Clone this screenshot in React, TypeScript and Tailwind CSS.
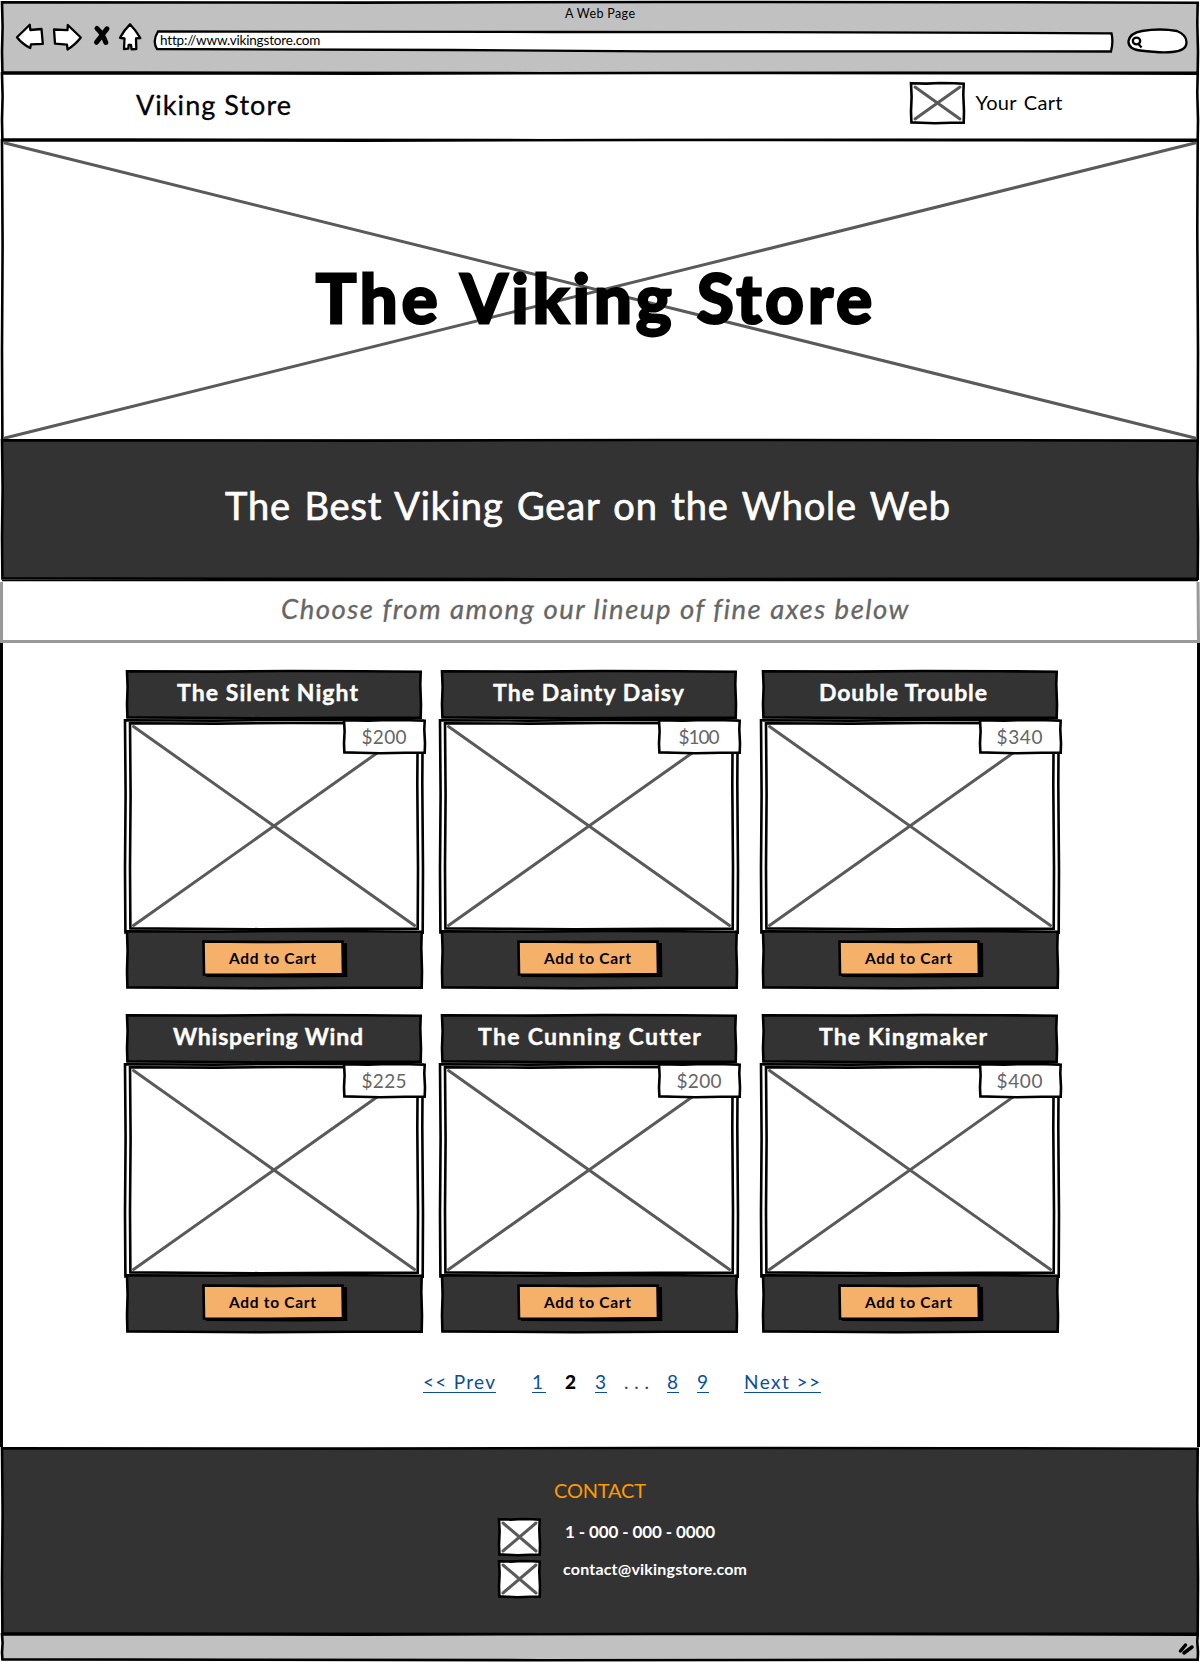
import { useLayoutEffect, useRef, useState } from "react";

/** A label whose letters are spread so that the line is exactly `w` pixels wide. */
function Label({ text, w, className = "" }: { text: string; w: number; className?: string }) {
  const ref = useRef<HTMLSpanElement>(null);
  const [gap, setGap] = useState(0);
  useLayoutEffect(() => {
    if (!ref.current) return;
    const natural = ref.current.getBoundingClientRect().width - gap * text.length;
    setGap((w - natural) / (text.length - 1 || 1));
  }, [text, w]);
  return (
    <span ref={ref} className={"block w-max shrink-0 whitespace-pre leading-none " + className} style={{ letterSpacing: gap }}>
      {text}
    </span>
  );
}

/** Hand-drawn rectangle that fills its positioned parent. */
function Sketch({
  w,
  h,
  fill = "#fff",
  stroke = "#000",
  sw = 2.6,
  cross = false,
  inset = 4,
}: {
  w: number;
  h: number;
  fill?: string;
  stroke?: string;
  sw?: number;
  cross?: boolean;
  inset?: number;
}) {
  const r = w - 1.3;
  const b = h - 1.3;
  return (
    <svg className="absolute left-0 top-0 overflow-visible" width={w} height={h} fill="none">
      <path
        d={`M1 1.2 L${w * 0.3} 1.6 L${w * 0.55} 1 L${w * 0.8} 1.2 L${r} 1.7 L${r - 0.4} ${h * 0.3} L${r + 0.3} ${h * 0.7} L${r} ${b} L${w * 0.75} ${b + 0.1} L${w * 0.45} ${b + 0.5} L${w * 0.2} ${b} L1.4 ${b - 0.3} L1 ${h * 0.7} L1.6 ${h * 0.35} Z`}
        fill={fill}
        stroke={stroke}
        strokeWidth={sw}
      />
      {cross && (
        <path
          d={`M${inset} ${inset} L${w - inset} ${h - inset} M${w - inset} ${inset} L${inset} ${h - inset}`}
          stroke="#5a5a5a"
          strokeWidth={3}
          strokeLinecap="round"
        />
      )}
    </svg>
  );
}

type Product = { name: string; w: number; title: string; price: string; pw: number; tag: string };

const products: Product[] = [
  { name: "The Silent Night", w: 181, title: "ml-[51.500px]", price: "$200", pw: 45, tag: "ml-[18.500px]" },
  { name: "The Dainty Daisy", w: 191, title: "ml-[52.500px]", price: "$100", pw: 41, tag: "ml-[20.500px]" },
  { name: "Double Trouble", w: 168, title: "ml-[57.500px]", price: "$340", pw: 46, tag: "ml-[17.500px]" },
  { name: "Whispering Wind", w: 190, title: "ml-[47.500px]", price: "$225", pw: 45, tag: "ml-[18.500px]" },
  { name: "The Cunning Cutter", w: 222, title: "ml-[37.500px]", price: "$200", pw: 45, tag: "ml-[18.500px]" },
  { name: "The Kingmaker", w: 168, title: "ml-[57.500px]", price: "$400", pw: 46, tag: "ml-[17.500px]" },
];

function Card({ p }: { p: Product }) {
  return (
    <article className="flex w-[300px] flex-col">
      <div className="relative ml-[1.5px] h-[49px] w-[296px]">
        <Sketch w={296} h={49} fill="#333" />
        <h3 className="relative pt-[10.5px] text-white">
          <Label text={p.name} w={p.w} className={"text-[23px] font-bold [-webkit-text-stroke:0.4px_#fff] " + p.title} />
        </h3>
      </div>
      <div className="relative h-[211px] pl-[5px] pt-[3px]">
        <Sketch w={300} h={215} />
        <div className="relative h-[208px] w-[290px]">
          <Sketch w={290} h={208} cross inset={4.5} />
        </div>
        <div className="absolute left-[219px] top-0 h-[35px] w-[83px] pt-[8px]">
          <Sketch w={83} h={35} />
          <Label text={p.price} w={p.pw} className={"relative text-[19px] text-[#666] " + p.tag} />
        </div>
      </div>
      <div className="relative ml-[2px] h-[59px] w-[297px] pl-[75.500px] pt-[10px]">
        <Sketch w={297} h={59} fill="#333" />
        <button className="relative flex h-[38px] w-[146px] items-start">
          <svg className="absolute left-0 top-0" width="146" height="38" fill="none">
            <path d="M4 4 L145 3 L145.300 37 L100 37.600 L4 37 Z" fill="#000" />
            <path d="M1.500 1.500 L70 2 L140.500 1.500 L141 34 L70 34.800 L2 34.500 Z" fill="#f5b06a" stroke="#000" strokeWidth="2.600" />
          </svg>
          <Label text="Add to Cart" w={87} className="relative ml-[27.500px] mt-[11px] text-[15.500px] font-bold" />
        </button>
      </div>
    </article>
  );
}

function BrowserBar() {
  return (
    <div className="relative h-[74px] w-[1200px]">
      <div className="absolute left-[1px] top-[0.500px]">
        <Sketch w={1198} h={73} fill="#c1c1c1" />
      </div>
      <div className="relative pl-[565px] pt-[8px]">
        <Label text="A Web Page" w={70} className="text-[12.500px]" />
      </div>
      <div className="relative mt-[1.500px] flex items-start pl-[15px]">
        <svg width="137" height="30" viewBox="15 22 137 30" fill="#fff" stroke="#000" strokeWidth="2.300" strokeLinejoin="round">
          <path d="M17 37.300 L29.800 24.800 L30.300 30 L41.500 29 L42.800 43.800 L31 44.300 L30.200 48 Q22 44 17 37.300 Z" />
          <path d="M80.800 37.500 L67.800 25 L67.500 30.200 L54 29.500 L55 43.700 L67 44.600 L67.500 49.500 Q75 45 80.800 37.500 Z" />
          <path d="M97 28.500 Q103 34 105.800 42.500 M107 28.800 Q101.500 36 96.500 42.300" fill="none" strokeWidth="5" strokeLinecap="round" />
          <path d="M130 24.300 Q124 30 120 37.800 L124.500 38.500 L124 49 L128.300 48.600 L128.600 45 L131 45 L131.600 49.300 L136.300 49 L136 38.400 L140.300 38 Q136 30.500 130 24.300 Z" />
        </svg>
        <div className="relative ml-[1px] h-[24px] w-[961px] pl-[7px] pt-[12px]">
          <svg className="absolute left-0 top-[8px] overflow-visible" width="961" height="22" fill="none">
            <path d="M5 1.500 L400 2 L700 2.300 L958.500 3.300 Q960.500 12 958 21.500 L500 21.300 L300 20 L4 19 Q-1 11 5 1.500 Z" fill="#fff" stroke="#000" strokeWidth="2.300" />
          </svg>
          <Label text="http://www.vikingstore.com" w={160} className="relative text-[13.500px]" />
        </div>
        <svg className="ml-[13px] mt-[5px]" width="62" height="27" viewBox="1127 27 62 27" fill="none" stroke="#000" strokeWidth="2.300">
          <path d="M1142 31 Q1160 28 1177 31 Q1187 35 1186.500 43 Q1186 51 1172 52 Q1160 53 1140 50.500 Q1128 49 1128.500 41 Q1130 33 1142 31 Z" fill="#fff" />
          <ellipse cx="1136.500" cy="41" rx="3.700" ry="3.300" />
          <path d="M1138 43.500 L1141.500 47.500" />
        </svg>
      </div>
    </div>
  );
}

export default function App() {
  return (
    <div className="relative flex h-[1662px] w-[1200px] flex-col overflow-hidden bg-white font-['Lato',sans-serif] text-black">
      <BrowserBar />

      <header className="relative -mt-[2px] flex h-[69px] w-[1200px] items-start">
        <div className="absolute left-[1px] top-0">
          <Sketch w={1198} h={69} />
        </div>
        <Label text="Viking Store" w={155} className="relative ml-[136px] mt-[18.500px] text-[27px] [-webkit-text-stroke:0.3px_#000]" />
        <div className="relative ml-[618px] mt-[10px] h-[42px] w-[55px] shrink-0">
          <Sketch w={55} h={42} cross inset={5} />
        </div>
        <Label text="Your Cart" w={87} className="relative ml-[10.500px] mt-[19.500px] text-[20px] [word-spacing:2px]" />
      </header>

      <section className="relative -mt-[2px] h-[303px] w-[1200px] pl-[316px] pt-[125px]">
        <div className="absolute left-[1px] top-0">
          <Sketch w={1198} h={303} cross inset={4} />
        </div>
        <h1 className="relative">
          <Label text="The Viking Store" w={556} className="text-[67px] font-bold [stroke-linejoin:round] [word-spacing:1px] [-webkit-text-stroke:3px_#000]" />
        </h1>
      </section>

      <section className="relative -mt-[3px] h-[142px] w-[1200px] pl-[225px] pt-[47px]">
        <div className="absolute left-[1px] top-0">
          <Sketch w={1198} h={141} fill="#333" />
        </div>
        <h2 className="relative text-white">
          <Label text="The Best Viking Gear on the Whole Web" w={725} className="text-[38px] [word-spacing:3px] [-webkit-text-stroke:0.7px_#fff]" />
        </h2>
      </section>

      <section className="relative -mt-[1px] h-[63px] w-[1200px] pl-[281px] pt-[15px]">
        <svg className="absolute left-0 top-0" width="1200" height="63" fill="none">
          <path d="M1.500 2 L1.500 61.500 L1198.500 61.500 L1198 2" stroke="#999" strokeWidth="3" />
          <path d="M2 0.500 L1198 0.500" stroke="#000" strokeWidth="1.500" />
        </svg>
        <p className="relative">
          <Label text="Choose from among our lineup of fine axes below" w={627} className="text-[27.500px] italic text-[#666] [-webkit-text-stroke:0.3px_#666]" />
        </p>
      </section>

      <main className="h-[804px] w-[1200px] border-x-[3px] border-black pl-[121px] pt-[27px]">
        <div className="grid auto-rows-[344px] grid-cols-[315px_321px_300px]">
          {products.map((p) => (
            <Card key={p.name} p={p} />
          ))}
        </div>
        <nav className="mt-[14px] flex items-start pl-[299px] text-[19px] text-[#0b4f96]">
          <a className="w-[73px] border-b border-[#0b4f96] pb-[1px]"><Label text="<< Prev" w={72} /></a>
          <a className="ml-[36px] w-[14px] border-b border-[#0b4f96] pb-[1px]"><Label text="1" w={10} /></a>
          <span className="ml-[19px] w-[12px] font-black text-black"><Label text="2" w={11} /></span>
          <a className="ml-[18px] w-[12px] border-b border-[#0b4f96] pb-[1px]"><Label text="3" w={11} /></a>
          <span className="ml-[17px] w-[26px] text-[#444]"><Label text=". . ." w={25} /></span>
          <a className="ml-[17px] w-[12px] border-b border-[#0b4f96] pb-[1px]"><Label text="8" w={11} /></a>
          <a className="ml-[18px] w-[12px] border-b border-[#0b4f96] pb-[1px]"><Label text="9" w={11} /></a>
          <a className="ml-[35px] w-[77px] border-b border-[#0b4f96] pb-[1px]"><Label text="Next >>" w={76} /></a>
        </nav>
      </main>

      <footer className="relative h-[188px] w-[1200px] pt-[33px]">
        <div className="absolute left-[1px] top-0">
          <Sketch w={1198} h={188} fill="#333" />
        </div>
        <Label text="CONTACT" w={92} className="relative ml-[554px] text-[20px] text-[#f90]" />
        <div className="relative mt-[18px] flex items-start pl-[498px]">
          <div className="relative h-[42px] w-[43px]">
            <Sketch w={43} h={38} cross inset={5} />
          </div>
          <Label text="1 - 000 - 000 - 0000" w={150} className="ml-[24px] mt-[5px] text-[17px] font-bold text-white" />
        </div>
        <div className="relative flex items-start pl-[498px]">
          <div className="relative h-[38px] w-[43px]">
            <Sketch w={43} h={38} cross inset={5} />
          </div>
          <Label text="contact@vikingstore.com" w={184} className="ml-[22px] mt-[1px] text-[16px] font-bold text-white" />
        </div>
      </footer>

      <div className="relative -mt-[2px] h-[29px] w-[1200px] pl-[1178px] pt-[9px]">
        <div className="absolute left-[1px] top-0">
          <Sketch w={1198} h={28} fill="#c1c1c1" />
        </div>
        <svg className="relative" width="17" height="14" stroke="#000" strokeWidth="3.500" strokeLinecap="round">
          <path d="M2.500 9 L7.500 3 M6 11 L14 5" />
        </svg>
      </div>
    </div>
  );
}
